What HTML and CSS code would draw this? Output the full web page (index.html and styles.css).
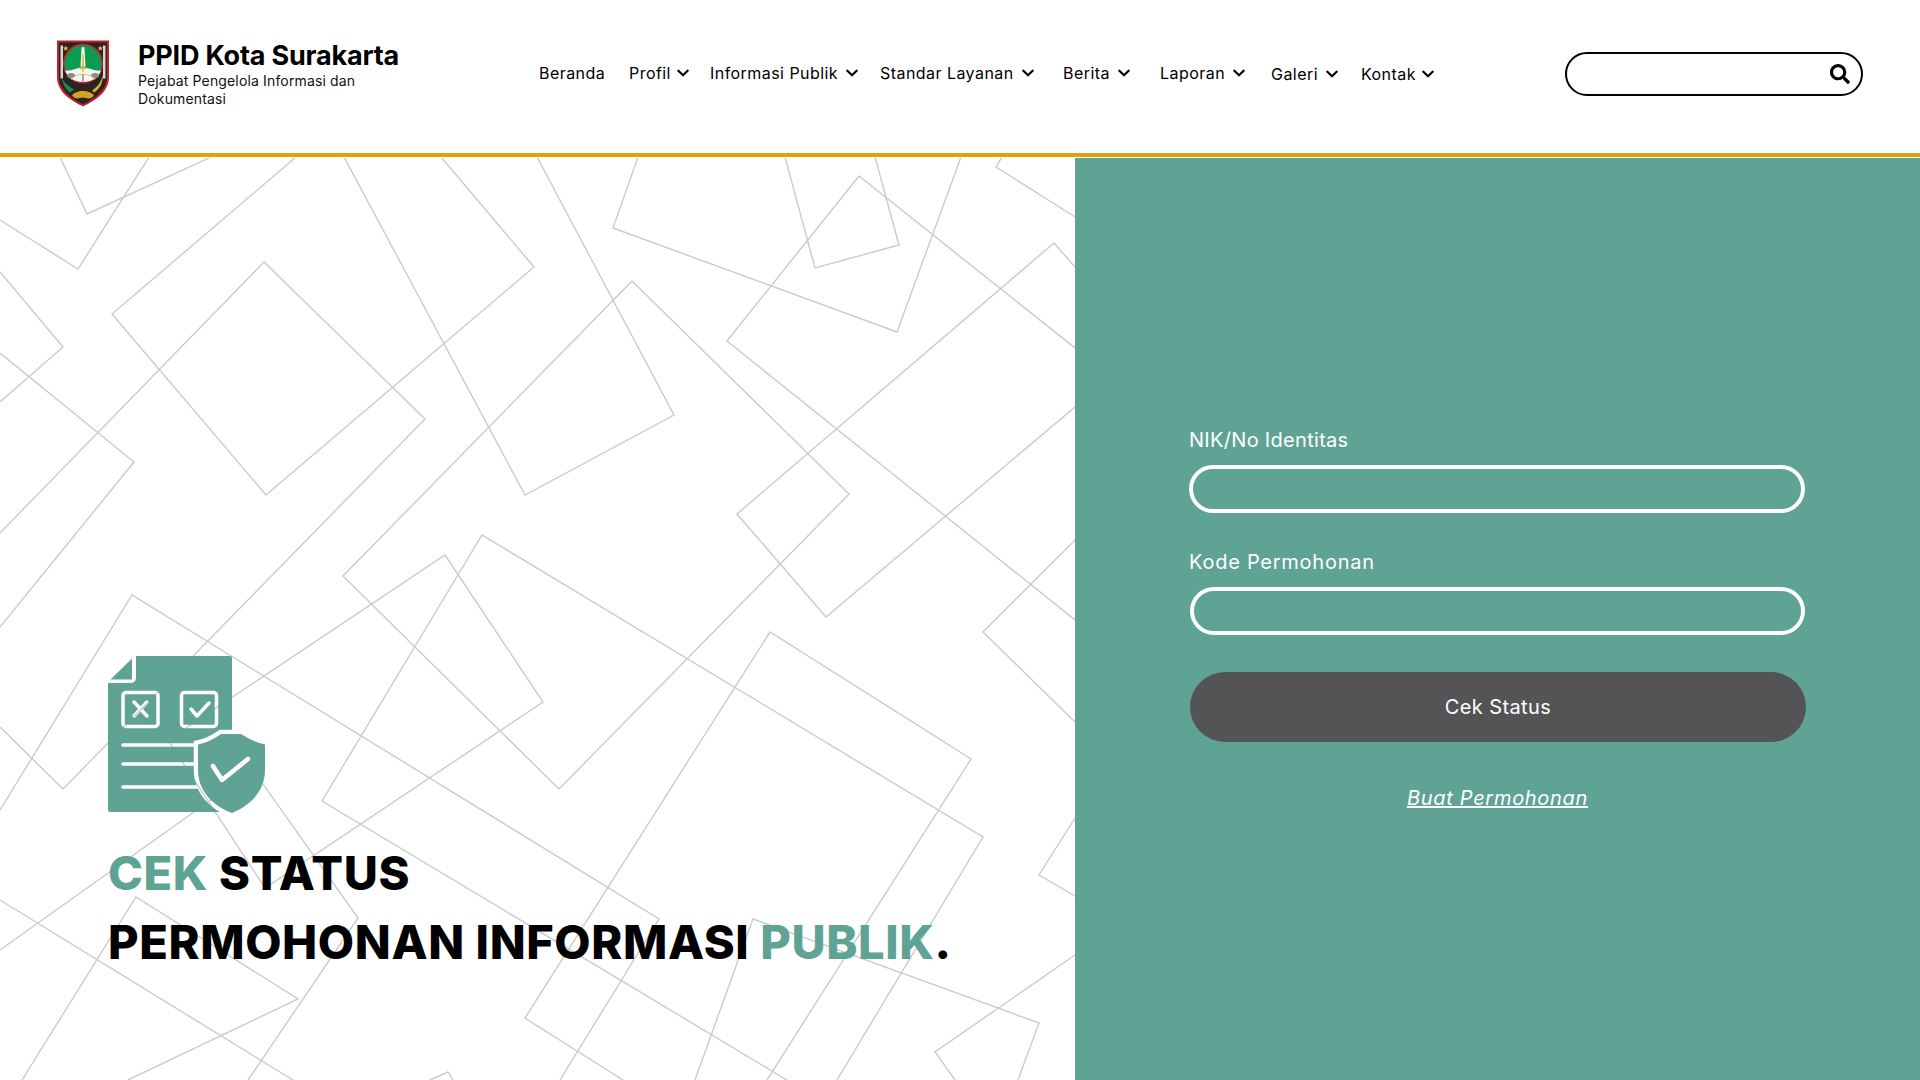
FILE: index.html
```html
<!DOCTYPE html>
<html lang="id">
<head>
<meta charset="utf-8">
<title>PPID Kota Surakarta - Cek Status</title>
<link rel="stylesheet" href="styles.css">
</head>
<body>
<header class="site-header">
  <a class="brand" href="#">
    <svg class="brand-logo" viewBox="0 0 52 66" aria-hidden="true">
      <path d="M0 0H52V36C52 52 38 60 26 66C14 60 0 52 0 36Z" fill="#c4202e"/>
      <path d="M2 2H50V36C50 50 37 58 26 64C15 58 2 50 2 36Z" fill="#2a2321"/>
      <path d="M3.500 5H6V38H3.500ZM46 5H48.500V38H46Z" fill="#d9d6d2"/>
      <path d="M8.700 5l.8 2h2l-1.600 1.300.6 2-1.800-1.200-1.800 1.200.6-2L6 7h2ZM43.300 5l.8 2h2l-1.600 1.300.6 2-1.800-1.200-1.800 1.200.6-2L40.600 7h2Z" fill="#e8c33a"/>
      <ellipse cx="26" cy="23" rx="20" ry="20" fill="#c4202e"/>
      <ellipse cx="26" cy="23" rx="18.500" ry="18.500" fill="#0b9c52"/>
      <path d="M8 30C14 31 20 27 26 27C32 27 38 31 44 30C41 38 34 41.500 26 41.500C18 41.500 11 38 8 30Z" fill="#f4f4f2"/>
      <path d="M24.500 8C24.500 6 27.500 6 27.500 8L28.500 26H23.500Z" fill="#f5f5f3"/>
      <path d="M25.200 14H26.800V30L26 33L25.200 30ZM22.800 27H29.200V28.500H22.800Z" fill="#e3b82f"/>
      <ellipse cx="14" cy="35" rx="4" ry="2.500" fill="#8b8b88"/>
      <ellipse cx="38" cy="35" rx="4" ry="2.500" fill="#8b8b88"/>
      <path d="M14 39C19 32 33 32 38 39" fill="none" stroke="#e4c552" stroke-width="1"/>
      <path d="M26 34V41" stroke="#333" stroke-width=".8"/>
      <path d="M46 34C46 44 42 49 37 52L35 50C40 47 44 42 46 34Z" fill="#d8ad1f"/>
      <path d="M5 38C6 45 9 49 13 52L17 49C12 46 8 43 5 38Z" fill="#1a8a4b"/>
      <path d="M15 55C19 49 33 49 37 55C33 60 30 57 26 57C22 57 19 60 15 55Z" fill="#d3a51d"/>
    </svg>
    <span class="brand-text">
      <strong class="brand-title">PPID Kota Surakarta</strong>
      <span class="brand-sub">Pejabat Pengelola Informasi dan Dokumentasi</span>
    </span>
  </a>
  <nav class="main-nav">
    <a class="nav-item" href="#">Beranda</a>
    <a class="nav-item nav-tight" href="#">Profil <svg class="chev" viewBox="0 0 448 512"><path d="M207 381.500L12.700 187.100c-9.400-9.400-9.400-24.600 0-33.900l22.700-22.700c9.400-9.400 24.500-9.400 33.900 0L224 284.500l154.700-154c9.400-9.400 24.500-9.300 33.900 0l22.700 22.700c9.400 9.400 9.400 24.600 0 33.900L241 381.500c-9.400 9.400-24.600 9.400-34 0z"/></svg></a>
    <a class="nav-item" href="#">Informasi Publik <svg class="chev" viewBox="0 0 448 512"><path d="M207 381.500L12.700 187.100c-9.400-9.400-9.400-24.600 0-33.900l22.700-22.700c9.400-9.400 24.500-9.400 33.900 0L224 284.500l154.700-154c9.400-9.400 24.500-9.300 33.900 0l22.700 22.700c9.400 9.400 9.400 24.600 0 33.900L241 381.500c-9.400 9.400-24.600 9.400-34 0z"/></svg></a>
    <a class="nav-item" href="#">Standar Layanan <svg class="chev" viewBox="0 0 448 512"><path d="M207 381.500L12.700 187.100c-9.400-9.400-9.400-24.600 0-33.900l22.700-22.700c9.400-9.400 24.500-9.400 33.900 0L224 284.500l154.700-154c9.400-9.400 24.500-9.300 33.900 0l22.700 22.700c9.400 9.400 9.400 24.600 0 33.900L241 381.500c-9.400 9.400-24.600 9.400-34 0z"/></svg></a>
    <a class="nav-item" href="#">Berita <svg class="chev" viewBox="0 0 448 512"><path d="M207 381.500L12.700 187.100c-9.400-9.400-9.400-24.600 0-33.900l22.700-22.700c9.400-9.400 24.500-9.400 33.900 0L224 284.500l154.700-154c9.400-9.400 24.500-9.300 33.900 0l22.700 22.700c9.400 9.400 9.400 24.600 0 33.900L241 381.500c-9.400 9.400-24.600 9.400-34 0z"/></svg></a>
    <a class="nav-item" href="#">Laporan <svg class="chev" viewBox="0 0 448 512"><path d="M207 381.500L12.700 187.100c-9.400-9.400-9.400-24.600 0-33.900l22.700-22.700c9.400-9.400 24.500-9.400 33.900 0L224 284.500l154.700-154c9.400-9.400 24.500-9.300 33.900 0l22.700 22.700c9.400 9.400 9.400 24.600 0 33.900L241 381.500c-9.400 9.400-24.600 9.400-34 0z"/></svg></a>
    <a class="nav-item nav-low" href="#">Galeri <svg class="chev" viewBox="0 0 448 512"><path d="M207 381.500L12.700 187.100c-9.400-9.400-9.400-24.600 0-33.900l22.700-22.700c9.400-9.400 24.500-9.400 33.900 0L224 284.500l154.700-154c9.400-9.400 24.500-9.300 33.900 0l22.700 22.700c9.400 9.400 9.400 24.600 0 33.900L241 381.500c-9.400 9.400-24.600 9.400-34 0z"/></svg></a>
    <a class="nav-item nav-low nav-tight" href="#">Kontak <svg class="chev" viewBox="0 0 448 512"><path d="M207 381.500L12.700 187.100c-9.400-9.400-9.400-24.600 0-33.900l22.700-22.700c9.400-9.400 24.500-9.400 33.900 0L224 284.500l154.700-154c9.400-9.400 24.500-9.300 33.900 0l22.700 22.700c9.400 9.400 9.400 24.600 0 33.900L241 381.500c-9.400 9.400-24.600 9.400-34 0z"/></svg></a>
  </nav>
  <form class="search-box">
    <input class="search-input" type="text" aria-label="Cari">
    <svg class="search-icon" viewBox="0 0 512 512"><path d="M505 442.700L405.300 343c-4.500-4.500-10.600-7-17-7H372c27.600-35.300 44-79.700 44-128C416 93.100 322.900 0 208 0S0 93.100 0 208s93.100 208 208 208c48.300 0 92.700-16.400 128-44v16.300c0 6.400 2.500 12.500 7 17l99.700 99.700c9.400 9.400 24.600 9.400 33.900 0l28.300-28.300c9.400-9.400 9.400-24.600.1-34zM208 336c-70.700 0-128-57.200-128-128 0-70.700 57.200-128 128-128 70.700 0 128 57.200 128 128 0 70.700-57.200 128-128 128z"/></svg>
  </form>
</header>

<main class="page">
  <section class="intro">
    <svg class="intro-bg" viewBox="0 158 1075 922" aria-hidden="true">
      <g class="bg-lines">
        <polyline points="60,157 87,214 211,157"/>
        <polyline points="0,220 78,269 149,157"/>
        <polyline points="296,157 112,314 266,495 534,267 441,157"/>
        <polyline points="344,157 525,495 674,415 537,157"/>
        <polyline points="638,157 613,228 897,332 961,157"/>
        <polyline points="785,157 815,268 899,245 875,157"/>
        <polyline points="1075,348 859,176 727,341 1075,620"/>
        <polyline points="1075,267 1054,243 737,514 826,617 1075,407"/>
        <polyline points="1002,157 996,167 1075,217"/>
        <polygon points="632,281 343,576 559,789 849,494"/>
        <polyline points="0,272 63,347 0,402"/>
        <polyline points="0,353 134,462 0,627"/>
        <polyline points="0,533 264,262 425,419 63,789 0,727"/>
        <polyline points="0,810 132,595 659,919 560,1080"/>
        <polygon points="445,555 543,702 265,888 168,740"/>
        <polyline points="0,950 253,770 358,918 248,1080"/>
        <polyline points="22,1080 136,897 298,999 128,1080"/>
        <polyline points="0,900 293,1080"/>
        <polyline points="430,1080 448,1072 453,1080"/>
        <polyline points="837,1080 983,837 482,535 322,801 787,1080"/>
        <polyline points="767,1080 971,759 770,632 525,1018 623,1080"/>
        <polyline points="695,1080 753,919 1039,1023 1018,1080"/>
        <polyline points="1075,955 935,1052 955,1080"/>
        <polyline points="1075,818 1039,875 1075,896"/>
        <polyline points="1075,540 983,632 1075,722"/>
      </g>
    </svg>
    <div class="intro-content">
      <svg class="intro-icon" viewBox="0 0 158 157" aria-hidden="true">
        <defs>
          <mask id="doc-cut" maskUnits="userSpaceOnUse" x="0" y="0" width="158" height="157">
            <rect class="mask-keep" width="158" height="157"/>
            <g class="mask-cut">
              <rect x="15" y="36.500" width="35" height="34" rx="3"/>
              <rect x="73.500" y="36.500" width="35" height="34" rx="3"/>
              <path d="M26 46L39 60M39 46L26 60"/>
              <path d="M83 53L89 60L101 47"/>
              <path d="M15 89H92M15 108H92M15 131H92"/>
            </g>
            <path class="mask-shield" d="M113 78H133Q145 86 157 88.500V114C157 135 142 150 124 157C105 150 90 135 90 114V88.500Q102 86 113 78Z"/>
          </mask>
          <mask id="shield-cut" maskUnits="userSpaceOnUse" x="0" y="0" width="158" height="157">
            <rect class="mask-keep" width="158" height="157"/>
            <path class="mask-check" d="M105 110L114 124L140 103"/>
          </mask>
        </defs>
        <g mask="url(#doc-cut)">
          <path class="icon-fill" d="M28 0H122Q124 0 124 2V156H2Q0 156 0 154V27H22Q28 27 28 21Z"/>
          <path class="icon-fill" d="M24 2.500V23.500H2.500Z"/>
        </g>
        <path class="icon-fill" mask="url(#shield-cut)" d="M113 78H133Q145 86 157 88.500V114C157 135 142 150 124 157C105 150 90 135 90 114V88.500Q102 86 113 78Z"/>
      </svg>
      <h1 class="intro-title"><span class="accent">CEK</span> STATUS<br>PERMOHONAN INFORMASI <span class="accent">PUBLIK</span>.</h1>
    </div>
  </section>

  <section class="status-panel">
    <form class="status-form">
      <label class="field-label label-nik" for="nik">NIK/No Identitas</label>
      <input class="field-input" id="nik" type="text">
      <label class="field-label label-kode" for="kode">Kode Permohonan</label>
      <input class="field-input" id="kode" type="text">
      <button class="submit-btn" type="button">Cek Status</button>
      <a class="request-link" href="#">Buat Permohonan</a>
    </form>
  </section>
</main>
</body>
</html>
```
FILE: styles.css
```css
* { box-sizing: border-box; }
html, body { margin: 0; height: 100%; }
body {
  width: 1920px;
  height: 1080px;
  overflow: hidden;
  background: #fff;
  color: #000;
  font-family: Inter, "Noto Sans", sans-serif;
}
a { color: inherit; text-decoration: none; }

.site-header {
  height: 157px;
  margin-bottom: 1px;
  border-bottom: 4px solid #dca30b;
  display: flex;
  align-items: center;
  padding: 0 58px 5px 57px;
}
.brand { display: flex; align-items: flex-start; width: 482px; flex: none; }
.brand-logo { width: 52px; height: 67px; flex: none; margin-right: 29px; }
.brand-text { display: flex; flex-direction: column; width: 270px; margin-top: -2px; }
.brand-title { font-size: 27px; font-weight: 700; line-height: 36px; letter-spacing: -.2px; white-space: nowrap; }
.brand-sub { font-size: 14px; line-height: 18px; margin-top: -1.500px; color: #111; letter-spacing: .15px; }

.main-nav {
  display: grid;
  grid-template-columns: 90px 81px 170px 183px 97px 111px 90px auto;
  align-items: center;
  font-size: 16px;
  letter-spacing: .45px;
  width: 1027px;
  flex: none;
  margin-bottom: 2px;
}
.nav-item { display: flex; align-items: center; white-space: nowrap; gap: 6px; }
.nav-tight { gap: 4px; }
.nav-low { position: relative; top: 1px; }
.chev { width: 12px; height: 14px; flex: none; fill: #000; margin-left: 2px; }

.search-box {
  flex: none;
  width: 298px;
  height: 44px;
  border: 2px solid #000;
  border-radius: 22px;
  display: flex;
  align-items: center;
  padding: 0 11px 0 16px;
  margin-left: -1px;
}
.search-input { flex: 1; min-width: 0; border: 0; outline: 0; background: none; }
.search-icon { width: 20px; height: 20px; flex: none; fill: #000; }

.page { display: flex; height: 922px; }
.intro {
  position: relative;
  width: 1075px;
  flex: none;
  display: flex;
  flex-direction: column;
  justify-content: flex-end;
  padding: 0 0 104px 108px;
  overflow: hidden;
}
.intro-bg { position: absolute; inset: 0; width: 1075px; height: 922px; }
.bg-lines polyline, .bg-lines polygon { fill: none; stroke: #cccaca; stroke-width: 1.4; }
.intro-content { position: relative; }
.intro-icon { display: block; width: 158px; height: 157px; margin-bottom: 25px; }
.icon-fill { fill: #5fa395; }
.mask-keep { fill: #fff; }
.mask-cut { fill: none; stroke: #000; stroke-width: 3.500; stroke-linecap: round; stroke-linejoin: round; }
.mask-shield { fill: #000; stroke: #000; stroke-width: 8.500; }
.mask-check { fill: none; stroke: #000; stroke-width: 4.500; stroke-linecap: round; stroke-linejoin: round; }
.intro-title {
  margin: 0;
  font-size: 47px;
  font-weight: 800;
  line-height: 69px;
  white-space: nowrap;
  letter-spacing: .6px;
}
.accent { color: #5fa395; }

.status-panel {
  flex: 1;
  background: #5fa395;
  padding: 267px 0 0 114px;
}
.status-form { display: flex; flex-direction: column; width: 617px; color: #fff; }
.field-label { font-size: 20px; line-height: 30px; margin-bottom: 10px; }
.label-nik { letter-spacing: .3px; }
.label-kode { letter-spacing: .75px; }
.field-input {
  width: 616px;
  height: 48px;
  border: 4px solid #fff;
  border-radius: 24px;
  background: transparent;
  outline: 0;
  margin-bottom: 34px;
}
.field-input + .field-label + .field-input { width: 615px; margin-left: 1px; margin-bottom: 37px; }
.submit-btn {
  width: 616px;
  height: 70px;
  margin-left: 1px;
  border: 0;
  border-radius: 35px;
  background: #545456;
  color: #fff;
  font: 400 20px Inter, "Noto Sans", sans-serif;
  letter-spacing: .4px;
}
.request-link {
  align-self: center;
  margin-top: 41px;
  font-size: 20px;
  line-height: 30px;
  font-style: italic;
  text-decoration: underline;
  letter-spacing: .7px;
}
```
